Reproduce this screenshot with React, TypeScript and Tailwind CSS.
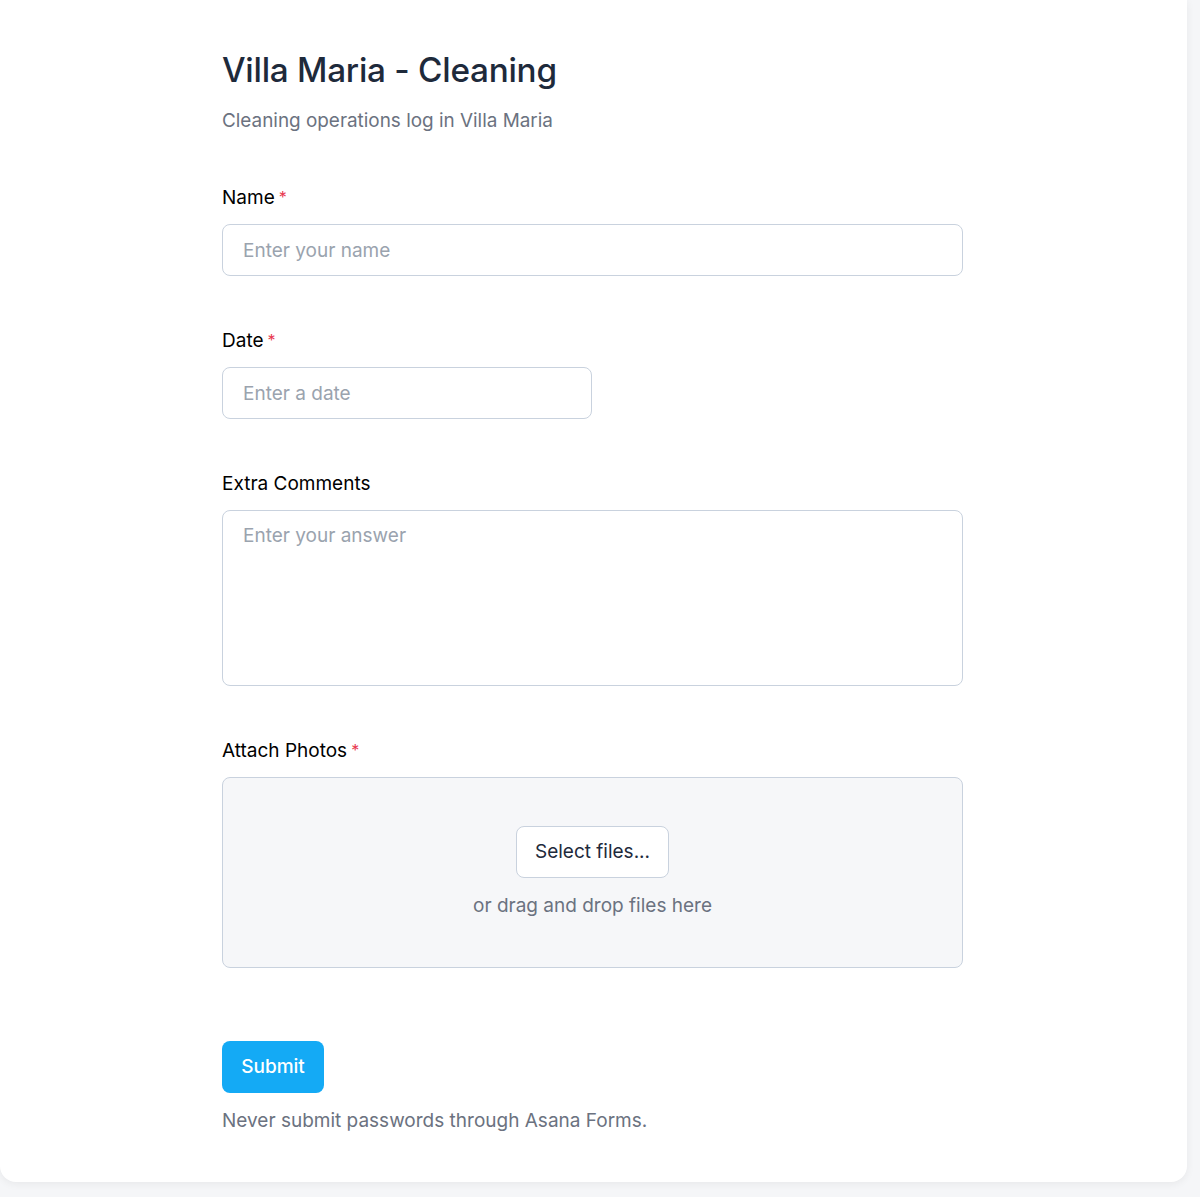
import React from 'react';

function Label({ text, required }: { text: string; required?: boolean }) {
    return (
        <div className="flex items-start h-[25px] text-[19px] leading-[25px] text-black mb-[14px]">
            <span>{text}</span>
            {required && <span className="text-[#e8384f] text-[16px] leading-4 ml-1 mt-[4px]">*</span>}
        </div>
    );
}

export default function App() {
    return (
        <div className="min-h-[1197px] bg-[#f5f6f8]" style={{ fontFamily: 'Inter, "Noto Sans", sans-serif' }}>
            <div className="w-[1187px] bg-white rounded-b-2xl shadow-[0_2px_8px_rgba(0,0,0,0.06)] pt-[50px] pb-[49px]">
                <div className="ml-[222px] w-[741px]">
                    <h1 className="text-[33.3px] leading-10 font-medium text-[#1e2a3b] tracking-[-0.25px]">Villa Maria - Cleaning</h1>
                    <p className="mt-[17px] text-[18.9px] leading-7 text-[#6b7280]">Cleaning operations log in Villa Maria</p>

                    <div className="mt-[50px]">
                        <Label text="Name" required />
                        <input
                            placeholder="Enter your name"
                            className="block w-full h-[52px] rounded-lg border border-[#c9d2de] px-5 text-[19px] text-[#1e2a3b] placeholder:text-[#9aa3ae] outline-none"
                        />
                    </div>

                    <div className="mt-[52px]">
                        <Label text="Date" required />
                        <input
                            placeholder="Enter a date"
                            className="block w-[370px] h-[52px] rounded-lg border border-[#c9d2de] px-5 text-[19px] text-[#1e2a3b] placeholder:text-[#9aa3ae] outline-none"
                        />
                    </div>

                    <div className="mt-[52px]">
                        <Label text="Extra Comments" />
                        <textarea
                            placeholder="Enter your answer"
                            className="block w-full h-[176px] resize-none rounded-lg border border-[#c9d2de] px-5 py-[13px] text-[19px] leading-6 text-[#1e2a3b] placeholder:text-[#9aa3ae] outline-none"
                        />
                    </div>

                    <div className="mt-[52px]">
                        <Label text="Attach Photos" required />
                        <div className="h-[191px] rounded-lg border border-[#c9d2de] bg-[#f6f7f9] flex flex-col items-center pt-[48px]">
                            <button className="h-[52px] px-[18px] pt-[1px] rounded-lg border border-[#c9d2de] bg-white text-[19px] text-[#1e2a3b]">
                                Select files...
                            </button>
                            <p className="mt-4 text-[19px] leading-6 text-[#6b7280]">or drag and drop files here</p>
                        </div>
                    </div>

                    <button className="block mt-[73px] h-[52px] w-[102px] rounded-lg bg-[#14aaf5] text-white text-[19px] font-medium">
                        Submit
                    </button>
                    <p className="mt-4 text-[19px] leading-6 text-[#6b7280]">Never submit passwords through Asana Forms.</p>
                </div>
            </div>
        </div>
    );
}
